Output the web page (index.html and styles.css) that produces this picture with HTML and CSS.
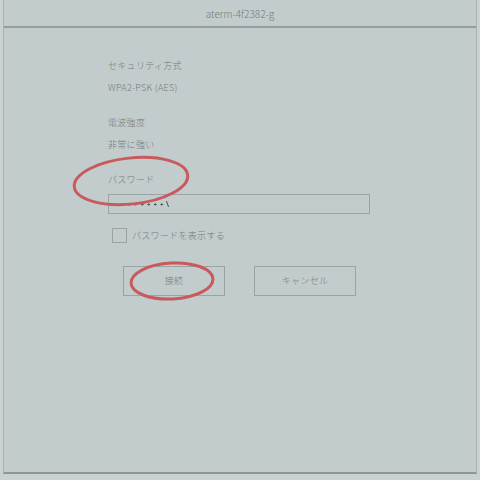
FILE: index.html
```html
<!DOCTYPE html>
<html lang="ja">
<head>
    <meta charset="UTF-8">
    <meta name="viewport" content="width=device-width, initial-scale=1.0">
    <title>aterm-4f2382-g</title>
    <link rel="stylesheet" href="styles.css">
</head>
<body>
    <div class="screen">
        <div class="header">aterm-4f2382-g</div>
        <div class="content">
            <div class="label">セキュリティ方式</div>
            <div class="value">WPA2-PSK (AES)</div>
            <div class="label gap">電波強度</div>
            <div class="value">非常に強い</div>
            <div class="label gap">パスワード</div>
            <div class="input">
                <span class="dots"></span><span class="cursor"></span>
            </div>
            <div class="check-row">
                <span class="checkbox"></span>
                <span class="check-label">パスワードを表示する</span>
            </div>
            <div class="buttons">
                <div class="button">接続</div>
                <div class="button">キャンセル</div>
            </div>
        </div>
        <!-- 赤い丸の書き込み -->
        <svg class="marks" width="480" height="480" viewBox="0 0 480 480">
            <ellipse cx="131" cy="181" rx="57" ry="23" transform="rotate(-6 131 181)" />
            <ellipse cx="172" cy="281" rx="41" ry="18" transform="rotate(-3 172 281)" />
        </svg>
    </div>
</body>
</html>
```

FILE: styles.css
```css
body {
    margin: 0;
    padding: 0;
    background-color: #c9d2d1;
    font-family: "Noto Sans CJK JP", "Noto Sans", sans-serif;
    font-weight: 300;
    color: #747b7b;
}

.screen {
    position: relative;
    margin: 0 3px;
    height: 472px;
    background-color: #c2cccc;
    border-left: 1px solid #aab3b2;
    border-right: 1px solid #aab3b2;
    border-bottom: 2px solid #8e9795;
}

.header {
    height: 26px;
    line-height: 27px;
    text-align: center;
    font-size: 10px;
    border-bottom: 2px solid #959e9d;
}

.content {
    padding: 31px 0 0 104px;
    font-size: 9px;
    line-height: 14px;
}

.label, .value {
    letter-spacing: 0.3px;
}

.value {
    margin-top: 8px;
}

.gap {
    margin-top: 21px;
}

.input {
    box-sizing: border-box;
    display: flex;
    align-items: center;
    margin-top: 7px;
    width: 262px;
    height: 20px;
    border: 1px solid #9ba4a3;
    padding-left: 4px;
}

.dots {
    display: inline-block;
    width: 52px;
    height: 3px;
    background-image: radial-gradient(circle, #4f5555 0.9px, transparent 1.3px);
    background-size: 6.5px 3px;
    background-repeat: repeat-x;
}

.cursor {
    display: inline-block;
    width: 1px;
    height: 6px;
    margin-left: 2px;
    background-color: #4f5555;
    transform: rotate(-20deg);
}

.check-row {
    display: flex;
    align-items: center;
    margin-top: 14px;
    padding-left: 4px;
}

.checkbox {
    width: 13px;
    height: 13px;
    border: 1px solid #9ba4a3;
}

.check-label {
    margin-left: 5px;
    letter-spacing: 0.3px;
}

.buttons {
    display: flex;
    gap: 29px;
    margin-top: 23px;
    padding-left: 15px;
}

.button {
    width: 100px;
    height: 28px;
    line-height: 28px;
    text-align: center;
    border: 1px solid #9ba4a3;
    letter-spacing: 0.3px;
}

.marks {
    position: absolute;
    left: -4px;
    top: 0;
    pointer-events: none;
}

.marks ellipse {
    fill: none;
    stroke: #c85a5d;
    stroke-width: 3;
}
```
